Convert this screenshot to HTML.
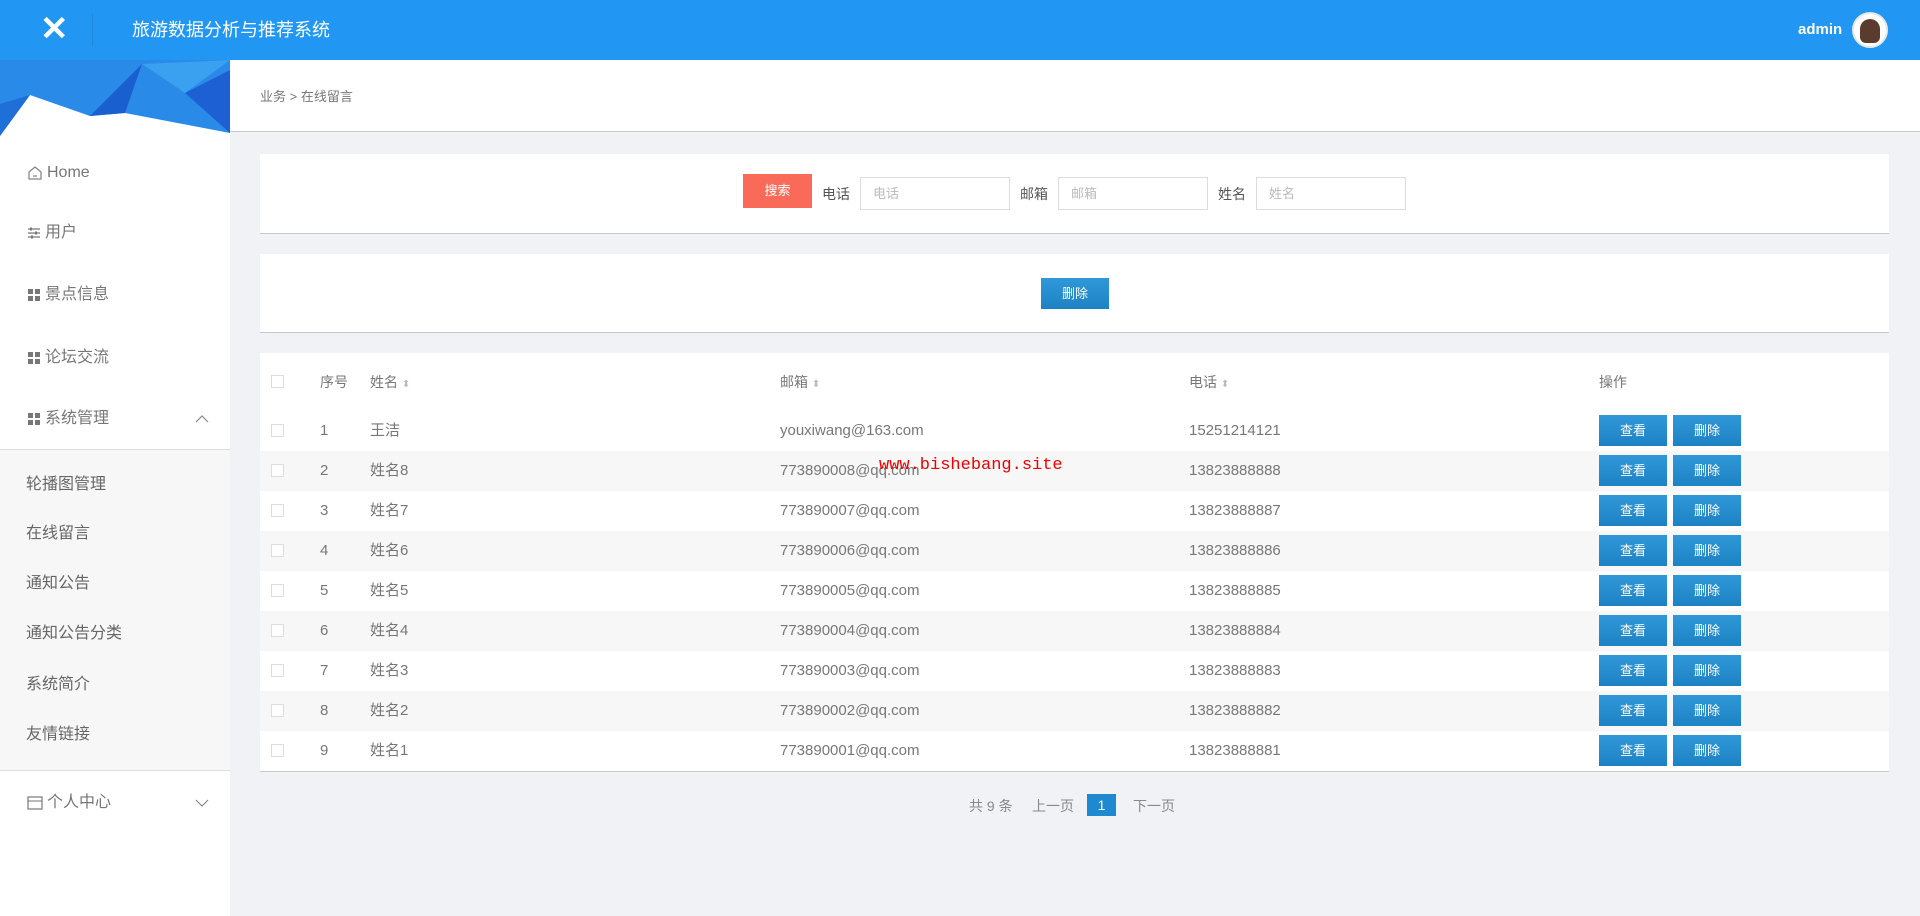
<!DOCTYPE html>
<html><head><meta charset="utf-8"><style>
*{margin:0;padding:0;box-sizing:border-box}
body{width:1920px;height:916px;overflow:hidden;background:#f1f2f5;font-family:"Liberation Sans","Noto Sans CJK SC",sans-serif;color:#666;position:relative;font-size:15px}
.abs{position:absolute}
.hdr{left:0;top:0;width:1920px;height:60px;background:#2196f3}
.side{left:0;top:60px;width:230px;height:856px;background:#fff}
.menu{position:absolute;left:27px;font-size:16px;line-height:20px;color:#777;display:flex;align-items:center;gap:4px}
.sub{position:absolute;left:26px;font-size:16px;line-height:20px;color:#666}
.card{background:#fff;position:absolute;left:260px;width:1629px;border-bottom:1px solid #c8c8c8}
.inp{position:absolute;width:150px;height:33px;border:1px solid #ddd;font-size:13px;line-height:15px;color:#bbb;padding:8px 12px}
.lbl{position:absolute;font-size:14px;line-height:18px;color:#555}
.btn{position:absolute;background:linear-gradient(#3098d8,#1d82c4);color:#fff;font-size:13px;text-align:center;line-height:31px;height:31px;width:68px}
.cell{position:absolute;font-size:15px;line-height:20px;color:#777}
.cb{position:absolute;left:271px;width:13px;height:13px;border:1px solid #ddd;background:#fff}
</style></head><body>
<div class="abs hdr"></div>
<div class="abs" style="left:40px;top:12px;color:#fff;font-size:34px;font-weight:bold;line-height:34px">✕</div>
<div class="abs" style="left:92px;top:14px;width:1px;height:32px;background:#1e88dd"></div>
<div class="abs" style="left:132px;top:19px;color:#fff;font-size:18px;line-height:22px">旅游数据分析与推荐系统</div>
<div class="abs" style="left:1798px;top:21px;color:#fff;font-size:15px;font-weight:bold">admin</div>
<div class="abs" style="left:1852px;top:12px;width:36px;height:36px;border-radius:50%;background:#fff;border:2px solid #e8e8e8"><div style="margin:5px auto;width:20px;height:24px;border-radius:10px 10px 6px 6px;background:#5a3b2e"></div></div>

<div class="abs side"></div>
<svg class="abs" style="left:0;top:60px" width="230" height="76" viewBox="0 0 230 76">
<rect width="230" height="76" fill="#2a8ae8"/>
<polygon points="0,76 30,35 90,56 125,53 230,73 230,76" fill="#fff"/>
<polygon points="0,44 30,35 0,76" fill="#1e6fd8"/>
<polygon points="90,56 142,4 125,53" fill="#1a5fd0"/>
<polygon points="185,33 230,10 230,73" fill="#1c60d4"/>
<polygon points="142,4 230,0 185,33" fill="#3aa0f0"/>
</svg>
<div class="menu" style="top:163px"><svg width="16" height="16" viewBox="0 0 16 16"><path d="M2 7 L8 2 L14 7 V14 H2 Z M6 11 H10" fill="none" stroke="#888" stroke-width="1.3"/></svg>Home</div>
<div class="menu" style="top:223px"><svg width="14" height="14" viewBox="0 0 14 14"><path d="M1 3H13M1 7H13M1 11H13" stroke="#777" stroke-width="1.2"/><rect x="3" y="1.5" width="2" height="3" fill="#777"/><rect x="8" y="5.5" width="2" height="3" fill="#777"/><rect x="4" y="9.5" width="2" height="3" fill="#777"/></svg>用户</div>
<div class="menu" style="top:285px"><svg width="14" height="14"><rect x="1" y="1" width="5" height="5" fill="#777"/><rect x="8" y="1" width="5" height="5" fill="#777"/><rect x="1" y="8" width="5" height="5" fill="#777"/><rect x="8" y="8" width="5" height="5" fill="#777"/></svg>景点信息</div>
<div class="menu" style="top:348px"><svg width="14" height="14"><rect x="1" y="1" width="5" height="5" fill="#777"/><rect x="8" y="1" width="5" height="5" fill="#777"/><rect x="1" y="8" width="5" height="5" fill="#777"/><rect x="8" y="8" width="5" height="5" fill="#777"/></svg>论坛交流</div>
<div class="menu" style="top:409px"><svg width="14" height="14"><rect x="1" y="1" width="5" height="5" fill="#777"/><rect x="8" y="1" width="5" height="5" fill="#777"/><rect x="1" y="8" width="5" height="5" fill="#777"/><rect x="8" y="8" width="5" height="5" fill="#777"/></svg>系统管理</div>
<svg class="abs" style="left:195px;top:414px" width="14" height="10"><path d="M1 8 L7 2 L13 8" fill="none" stroke="#888" stroke-width="1.2"/></svg>
<div class="abs" style="left:0;top:449px;width:230px;height:322px;background:#f7f7f7;border-top:1px solid #ddd;border-bottom:1px solid #ddd"></div>
<div class="sub" style="top:475px">轮播图管理</div>
<div class="sub" style="top:524px">在线留言</div>
<div class="sub" style="top:574px">通知公告</div>
<div class="sub" style="top:624px">通知公告分类</div>
<div class="sub" style="top:675px">系统简介</div>
<div class="sub" style="top:725px">友情链接</div>
<div class="menu" style="top:793px"><svg width="16" height="14"><rect x="1" y="1" width="14" height="12" fill="none" stroke="#777" stroke-width="1.2"/><path d="M1 5H15" stroke="#777"/></svg>个人中心</div>
<svg class="abs" style="left:195px;top:798px" width="14" height="10"><path d="M1 2 L7 8 L13 2" fill="none" stroke="#888" stroke-width="1.2"/></svg>

<div class="abs" style="left:230px;top:60px;width:1690px;height:72px;background:#fff;border-bottom:1px solid #c8c8c8"></div>
<div class="abs" style="left:260px;top:88px;font-size:13px;line-height:18px;color:#777">业务 &gt; 在线留言</div>

<div class="card" style="top:154px;height:80px"></div>
<div class="abs" style="left:743px;top:174px;width:69px;height:34px;background:#f96a58;color:#fff;font-size:13px;text-align:center;line-height:34px">搜索</div>
<div class="lbl" style="left:822px;top:185px">电话</div><div class="inp" style="left:860px;top:177px">电话</div>
<div class="lbl" style="left:1020px;top:185px">邮箱</div><div class="inp" style="left:1058px;top:177px">邮箱</div>
<div class="lbl" style="left:1218px;top:185px">姓名</div><div class="inp" style="left:1256px;top:177px">姓名</div>

<div class="card" style="top:254px;height:79px"></div>
<div class="btn" style="left:1041px;top:278px">删除</div>

<div class="card" style="top:353px;height:419px"></div>
<div class="cb" style="top:375px"></div>
<div class="cell" style="left:320px;top:372px;font-size:14px">序号</div>
<div class="cell" style="left:370px;top:372px;font-size:14px">姓名 <span style="color:#bbb;font-size:10px">⬍</span></div>
<div class="cell" style="left:780px;top:372px;font-size:14px">邮箱 <span style="color:#bbb;font-size:10px">⬍</span></div>
<div class="cell" style="left:1189px;top:372px;font-size:14px">电话 <span style="color:#bbb;font-size:10px">⬍</span></div>
<div class="cell" style="left:1599px;top:372px;font-size:14px">操作</div>

<div id="rows"></div>
<script>
var d=[["1","王洁","youxiwang@163.com","15251214121"]];
for(var i=2;i<=9;i++)d.push([""+i,"姓名"+(10-i),"77389000"+(10-i)+"@qq.com","1382388888"+(10-i)]);
var h="";
d.forEach(function(r,k){var c=431+k*40;
if(k%2==1)h+='<div class="abs" style="left:260px;top:'+(c-20)+'px;width:1629px;height:40px;background:#f7f7f8"></div>';
h+='<div class="cb" style="top:'+(c-7)+'px"></div>';
h+='<div class="cell" style="left:320px;top:'+(c-10)+'px">'+r[0]+'</div><div class="cell" style="left:370px;top:'+(c-10)+'px">'+r[1]+'</div><div class="cell" style="left:780px;top:'+(c-10)+'px">'+r[2]+'</div><div class="cell" style="left:1189px;top:'+(c-10)+'px">'+r[3]+'</div>';
h+='<div class="btn" style="left:1599px;top:'+(c-16)+'px">查看</div><div class="btn" style="left:1673px;top:'+(c-16)+'px">删除</div>';});
document.getElementById("rows").innerHTML=h;
</script>
<div class="abs" style="left:879px;top:456px;color:#e00;font-size:17px;line-height:20px;font-family:'Liberation Mono',monospace">www.bishebang.site</div>

<div class="abs" style="left:969px;top:797px;font-size:14px;line-height:18px;color:#888">共 9 条</div>
<div class="abs" style="left:1032px;top:797px;font-size:14px;line-height:18px;color:#888">上一页</div>
<div class="abs" style="left:1087px;top:794px;width:29px;height:22px;background:#1e88d0;color:#fff;font-size:14px;text-align:center;line-height:22px">1</div>
<div class="abs" style="left:1133px;top:797px;font-size:14px;line-height:18px;color:#888">下一页</div>
</body></html>
